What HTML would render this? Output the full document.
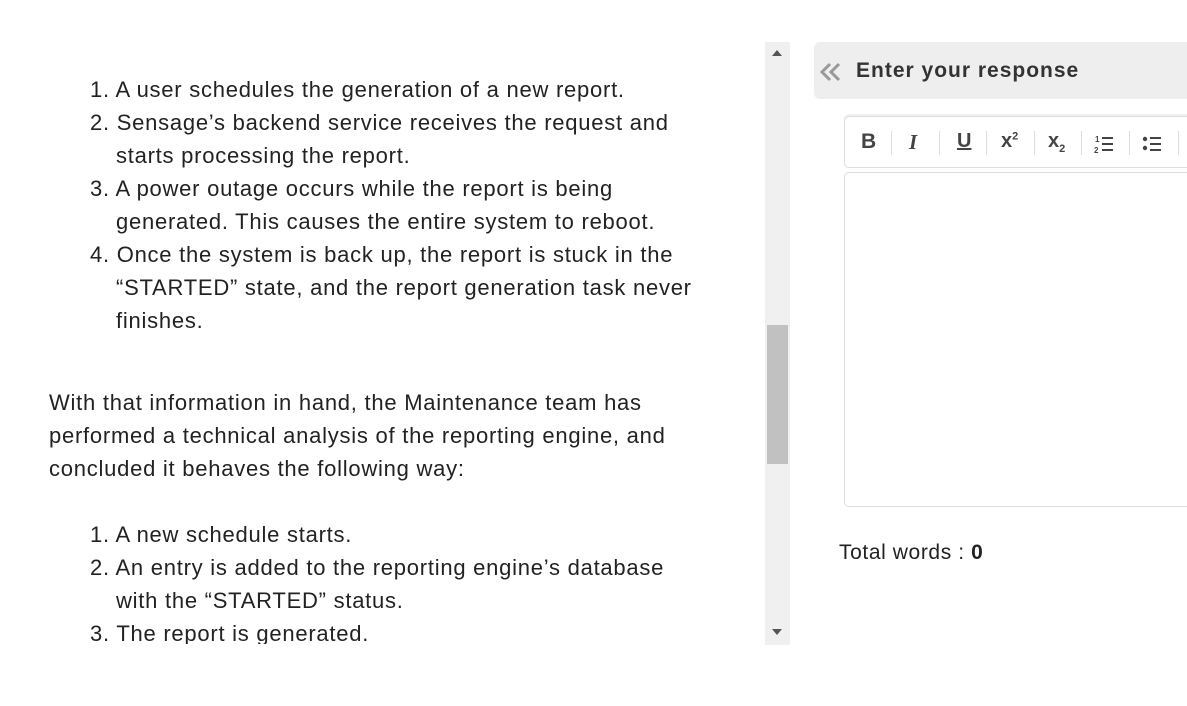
<!DOCTYPE html>
<html><head><style>
body{margin:0;width:1187px;height:706px;overflow:hidden;background:#fff;font-family:"Liberation Sans",Arial,sans-serif;color:#222;position:relative}
.t{position:absolute;font-size:22px;letter-spacing:0.75px;line-height:33px;white-space:nowrap}
.sb{position:absolute;left:765px;top:42px;width:25px;height:603px;background:#f0f0f0}
.th{position:absolute;left:767px;top:325px;width:21px;height:139px;background:#c1c1c1}
.hd{position:absolute;left:814px;top:42px;width:400px;height:57px;background:#eeeeee;border-radius:6px}
.tb{position:absolute;left:844px;top:116px;width:400px;height:50px;border:1px solid #ddd;border-radius:5px;background:#fff;box-shadow:0 -2px 0 #f0f0f0}
.ed{position:absolute;left:844px;top:172px;width:400px;height:333px;border:1px solid #ddd;border-radius:5px}
.btn{position:absolute;top:13px;font-size:21px;font-weight:bold;color:#444}
.sep{position:absolute;top:14px;width:1px;height:24px;background:#ddd}
</style></head><body>
<div class="t" style="left:90px;top:73px">1. A user schedules the generation of a new report.</div>
<div class="t" style="left:90px;top:106px">2. Sensage’s backend service receives the request and</div>
<div class="t" style="left:116px;top:139px">starts processing the report.</div>
<div class="t" style="left:90px;top:172px">3. A power outage occurs while the report is being</div>
<div class="t" style="left:116px;top:205px">generated. This causes the entire system to reboot.</div>
<div class="t" style="left:90px;top:238px">4. Once the system is back up, the report is stuck in the</div>
<div class="t" style="left:116px;top:271px">“STARTED” state, and the report generation task never</div>
<div class="t" style="left:116px;top:304px">finishes.</div>
<div class="t" style="left:49px;top:386px">With that information in hand, the Maintenance team has</div>
<div class="t" style="left:49px;top:419px">performed a technical analysis of the reporting engine, and</div>
<div class="t" style="left:49px;top:452px">concluded it behaves the following way:</div>
<div class="t" style="left:90px;top:518px">1. A new schedule starts.</div>
<div class="t" style="left:90px;top:551px">2. An entry is added to the reporting engine’s database</div>
<div class="t" style="left:116px;top:584px">with the “STARTED” status.</div>
<div class="t" style="left:90px;top:617px;height:27px;overflow:hidden">3. The report is generated.</div>
<div class="sb"></div><div class="th"></div>
<div style="position:absolute;left:772px;top:50px;width:0;height:0;border-left:5px solid transparent;border-right:5px solid transparent;border-bottom:6px solid #555"></div>
<div style="position:absolute;left:772px;top:629px;width:0;height:0;border-left:5px solid transparent;border-right:5px solid transparent;border-top:6px solid #555"></div>
<div class="hd"></div>
<svg style="position:absolute;left:818px;top:62px" width="28" height="20" viewBox="0 0 28 20"><path d="M12 2 L4 10 L12 18 M21 2 L13 10 L21 18" fill="none" stroke="#999" stroke-width="3"/></svg>
<div style="position:absolute;left:856px;top:59px;font-size:21px;letter-spacing:1px;font-weight:bold;color:#333">Enter your response</div>
<div class="tb">
<span class="btn" style="left:16px">B</span><div class="sep" style="left:46px"></div>
<span class="btn" style="left:64px;font-family:'Liberation Serif',serif;font-style:italic">I</span><div class="sep" style="left:94px"></div>
<span class="btn" style="left:112px;text-decoration:underline;font-size:20px">U</span><div class="sep" style="left:141px"></div>
<span class="btn" style="left:156px;font-size:20px">x<sup style="font-size:11px">2</sup></span><div class="sep" style="left:189px"></div>
<span class="btn" style="left:203px;font-size:20px">x<sub style="font-size:11px">2</sub></span><div class="sep" style="left:236px"></div>
<svg style="position:absolute;left:249px;top:17px" width="20" height="20" viewBox="0 0 20 20" fill="#444"><rect x="8" y="3" width="11" height="2"/><rect x="8" y="9" width="11" height="2"/><rect x="8" y="15" width="11" height="2"/><text x="1" y="8" font-size="8" font-family="Liberation Sans" font-weight="bold">1</text><text x="0" y="19" font-size="8" font-family="Liberation Sans" font-weight="bold">2</text></svg>
<div class="sep" style="left:284px"></div>
<svg style="position:absolute;left:297px;top:17px" width="20" height="20" viewBox="0 0 20 20" fill="#444"><rect x="8" y="3" width="11" height="2"/><rect x="8" y="9" width="11" height="2"/><rect x="8" y="15" width="11" height="2"/><circle cx="3" cy="5" r="2.2"/><circle cx="3" cy="14" r="2.2"/></svg>
<div class="sep" style="left:333px"></div>
</div>
<div class="ed"></div>
<div style="position:absolute;left:839px;top:541px;font-size:21px;letter-spacing:0.6px;color:#222">Total words : <b>0</b></div>
</body></html>
